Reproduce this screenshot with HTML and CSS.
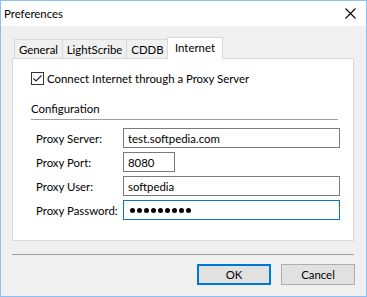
FILE: index.html
```html
<!DOCTYPE html>
<html lang="en">
<head>
  <meta charset="UTF-8" />
  <title>Preferences</title>
  <link rel="stylesheet" href="styles.css">
</head>
<body>
  <div class="window">
    <div class="titlebar">
      <span class="title">Preferences</span>
      <svg class="close" width="11" height="11" viewBox="0 0 11 11">
        <path d="M0.5 0.5 L10.5 10.5 M10.5 0.5 L0.5 10.5" stroke="#000" stroke-width="1.1" fill="none"/>
      </svg>
    </div>

    <div class="content">
      <!-- TABS -->
      <div class="tabs">
        <div class="tab tab-general">General</div>
        <div class="tab tab-light">LightScribe</div>
        <div class="tab tab-cddb">CDDB</div>
        <div class="tab tab-internet active">Internet</div>
      </div>

      <div class="panel">
        <label class="check">
          <span class="box">
            <svg width="11" height="11" viewBox="0 0 11 11">
              <path d="M1.5 5.5 L4 8 L9.5 2.5" stroke="#222" stroke-width="1.1" fill="none"/>
            </svg>
          </span>
          Connect Internet through a Proxy Server
        </label>

        <div class="group-title">Configuration</div>
        <div class="rule"></div>

        <div class="fields">
          <span class="label">Proxy Server:</span>
          <div class="field wide">test.softpedia.com</div>

          <span class="label">Proxy Port:</span>
          <div class="field short">8080</div>

          <span class="label">Proxy User:</span>
          <div class="field wide">softpedia</div>

          <span class="label">Proxy Password:</span>
          <div class="field wide focus">
            <span class="dot"></span><span class="dot"></span><span class="dot"></span>
            <span class="dot"></span><span class="dot"></span><span class="dot"></span>
            <span class="dot"></span><span class="dot"></span><span class="dot"></span>
          </div>
        </div>
      </div>

      <div class="separator"></div>

      <div class="buttons">
        <button class="btn default">OK</button>
        <button class="btn">Cancel</button>
      </div>
    </div>
  </div>
</body>
</html>
```

FILE: styles.css
```css
* {
  margin: 0;
  padding: 0;
  box-sizing: border-box;
}

body {
  font-family: 'Lato', sans-serif;
  font-size: 11.4px;
  color: #000;
  background: #fff;
  white-space: nowrap;
}

.window {
  width: 367px;
  height: 297px;
  border: 1px solid #8ac0f2;
  background: #f0f0f0;
  display: flex;
  flex-direction: column;
}

.titlebar {
  height: 25px;
  background: #fff;
  display: flex;
  align-items: center;
  justify-content: space-between;
  padding: 0 10px 0 3px;
}

.close {
  display: block;
}

.content {
  padding: 11px 12px 0 11px;
}

/* tabs */
.tabs {
  display: flex;
  align-items: flex-end;
  height: 21px;
  padding-left: 2px;
}

.tab {
  height: 19px;
  border: 1px solid #d9d9d9;
  border-bottom: none;
  background: #f0f0f0;
  display: flex;
  align-items: center;
  justify-content: center;
}

.tab-general { width: 49px; }
.tab-light { width: 65px; margin-left: -1px; }
.tab-cddb { width: 43px; margin-left: -1px; }
.tab-internet { width: 56px; margin-left: -2px; }

.tab.active {
  height: 22px;
  margin-bottom: -1px;
  background: #fff;
  position: relative;
  z-index: 1;
  padding-bottom: 2px;
}

.panel {
  height: 183px;
  background: #fff;
  border: 1px solid #d9d9d9;
  padding: 13px 13px 0 18px;
}

.check {
  display: flex;
  align-items: center;
  gap: 3px;
  height: 13px;
}

.box {
  width: 13px;
  height: 13px;
  border: 1px solid #333;
  background: #fff;
  display: flex;
  align-items: center;
  justify-content: center;
}

.group-title {
  margin-top: 16px;
  height: 15px;
  line-height: 15px;
}

.rule {
  margin-top: 3px;
  margin-right: 2px;
  height: 1px;
  background: #a0a0a0;
}

.fields {
  margin-top: 8px;
  display: grid;
  grid-template-columns: 92px 1fr;
  row-gap: 4px;
  align-items: center;
}

.label {
  padding-left: 5px;
}

.field {
  height: 20px;
  border: 1px solid #7a7a7a;
  padding: 0 4px;
  display: flex;
  align-items: center;
  background: #fff;
}

.field.short {
  width: 52px;
}

.field.focus {
  border-color: #0078d7;
  gap: 2px;
  padding-left: 6px;
}

.dot {
  width: 5px;
  height: 5px;
  border-radius: 50%;
  background: #000;
}

.separator {
  margin-top: 13px;
  height: 1px;
  background: #a0a0a0;
}

.buttons {
  margin-top: 9px;
  display: flex;
  justify-content: flex-end;
  gap: 10px;
  margin-right: -1px;
}

.btn {
  width: 74px;
  height: 21px;
  background: #e1e1e1;
  border: 1px solid #adadad;
  font-family: 'Lato', sans-serif;
  font-size: 11.4px;
  color: #000;
}

.btn.default {
  border: 2px solid #0078d7;
}
```
